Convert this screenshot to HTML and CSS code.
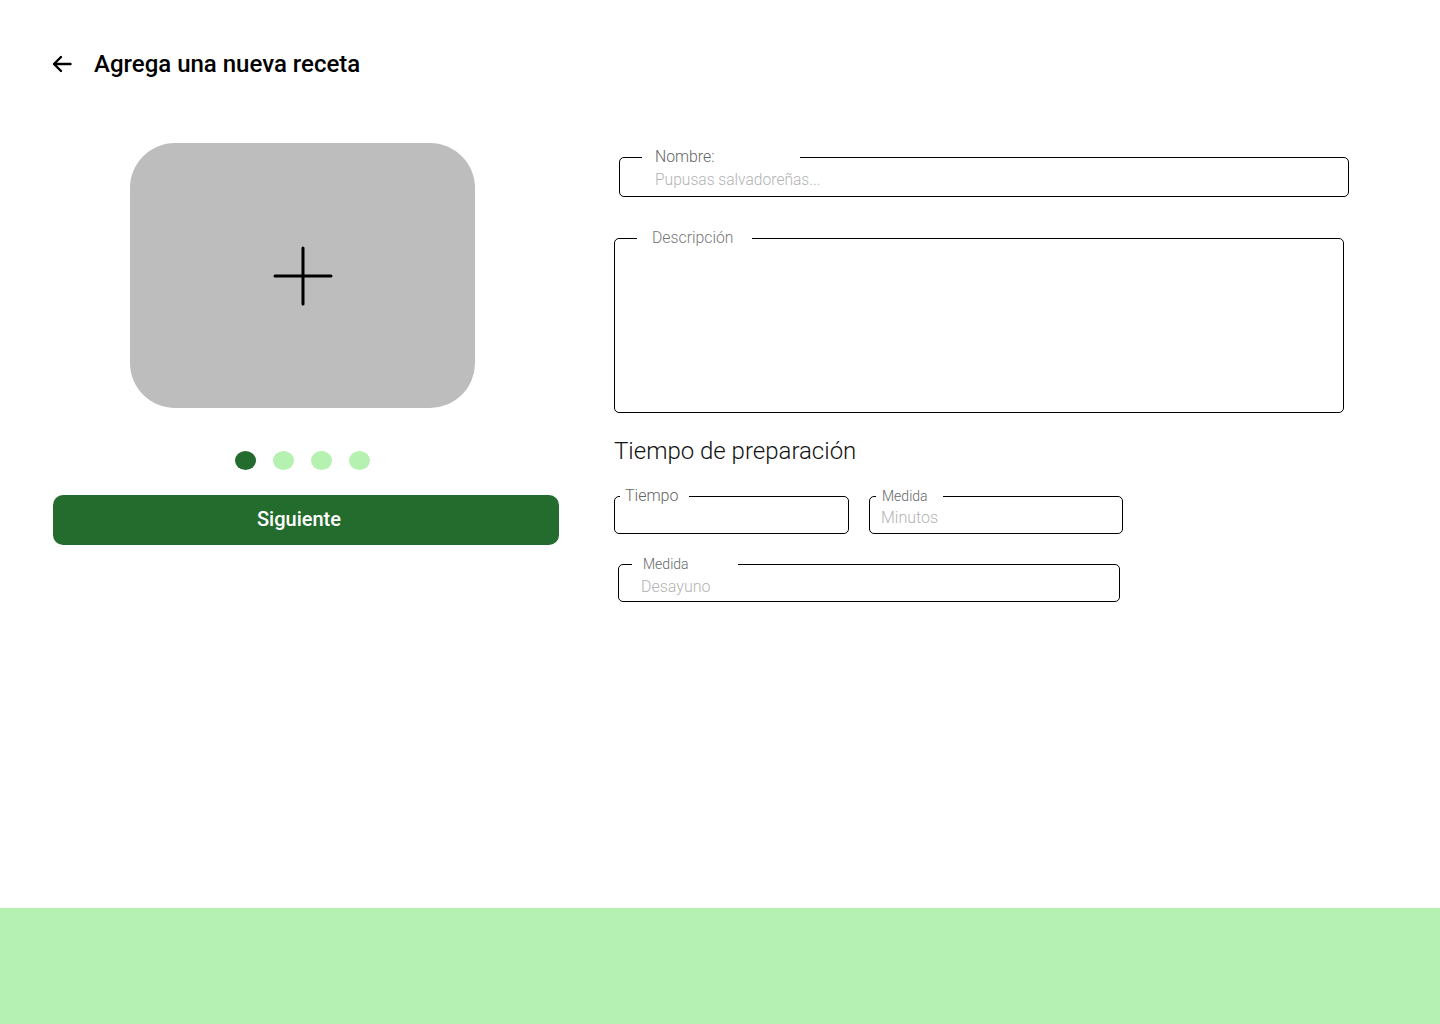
FILE: index.html
```html
<!DOCTYPE html>
<html lang="es">
<head>
<meta charset="utf-8">
<title>Agrega una nueva receta</title>
<link rel="stylesheet" href="styles.css">
</head>
<body>
<header class="topbar">
  <button class="back-btn" aria-label="Volver">
    <svg width="24" height="24" viewBox="0 0 24 24" fill="none" stroke="#000" stroke-width="2.4" stroke-linecap="round" stroke-linejoin="round"><path d="M20.5 12H4M11 5l-7 7 7 7"/></svg>
  </button>
  <h1 class="title">Agrega una nueva receta</h1>
</header>

<main class="content">
  <section class="media-col">
    <div class="media-stack">
      <div class="photo-drop">
        <svg width="60" height="60" viewBox="0 0 60 60" fill="none" stroke="#000" stroke-width="3" stroke-linecap="round"><path d="M30 2v56M2 30h56"/></svg>
      </div>
      <div class="dots">
        <span class="dot active"></span>
        <span class="dot"></span>
        <span class="dot"></span>
        <span class="dot"></span>
      </div>
    </div>
    <button class="next-btn">Siguiente</button>
  </section>

  <section class="form-col">
    <fieldset class="field field-name">
      <legend>Nombre:</legend>
      <div class="placeholder">Pupusas salvadoreñas...</div>
    </fieldset>

    <fieldset class="field field-desc">
      <legend>Descripción</legend>
      <div class="textarea"></div>
    </fieldset>

    <h2 class="section-title">Tiempo de preparación</h2>

    <div class="time-row">
      <fieldset class="field field-time">
        <legend>Tiempo</legend>
        <div class="placeholder"></div>
      </fieldset>
      <fieldset class="field field-unit">
        <legend>Medida</legend>
        <div class="placeholder">Minutos</div>
      </fieldset>
    </div>

    <fieldset class="field field-meal">
      <legend>Medida</legend>
      <div class="placeholder">Desayuno</div>
    </fieldset>
  </section>
</main>

<footer class="footer-band"></footer>
</body>
</html>
```

FILE: styles.css
```css
* { box-sizing: border-box; }

html, body {
  margin: 0;
  padding: 0;
}

body {
  min-height: 100vh;
  display: flex;
  flex-direction: column;
  font-family: Roboto, "Liberation Sans", sans-serif;
  color: #000;
  background: #fff;
}

/* Header */
.topbar {
  display: flex;
  align-items: center;
  padding: 50px 0 0 50px;
  height: 78px;
}

.back-btn {
  border: 0;
  background: none;
  padding: 0;
  width: 24px;
  height: 24px;
  display: flex;
  align-items: center;
  justify-content: center;
  cursor: pointer;
}

.title {
  margin: 0 0 0 20px;
  font-size: 24px;
  line-height: 28px;
  font-weight: 500;
}

/* Main */
.content {
  flex: 1;
  display: flex;
  align-items: flex-start;
  padding: 65px 0 0 53px;
  gap: 55px;
}

.media-col {
  width: 506px;
  display: flex;
  flex-direction: column;
}

.media-stack {
  width: 345px;
  margin-left: 77px;
  display: flex;
  flex-direction: column;
  align-items: center;
}

.photo-drop {
  width: 345px;
  height: 265px;
  border-radius: 45px;
  background: #bdbdbd;
  display: flex;
  align-items: center;
  justify-content: center;
}

.dots {
  display: flex;
  gap: 17px;
  margin-top: 43px;
}

.dot {
  width: 21px;
  height: 19px;
  border-radius: 50%;
  background: #b5f1b1;
}

.dot.active {
  background: #246b2e;
}

.next-btn {
  margin-top: 25px;
  width: 506px;
  height: 50px;
  border: 0;
  border-radius: 10px;
  background: #246b2e;
  color: #fff;
  font-family: Roboto, "Liberation Sans", sans-serif;
  font-size: 20px;
  font-weight: 500;
  padding: 0 14px 2px 0;
  cursor: pointer;
}

/* Form */
.form-col {
  width: 740px;
  padding-top: 5px;
  display: flex;
  flex-direction: column;
  align-items: flex-start;
}

.field {
  margin: 0;
  min-width: 0;
  border: 1px solid #000;
  border-radius: 5px;
}

.field legend {
  font-weight: 300;
  color: #666;
  line-height: 18px;
}

.placeholder {
  font-weight: 300;
  color: #b3b3b3;
  line-height: 20px;
  height: 20px;
  font-size: 16px;
}

.field-name {
  width: 730px;
  margin-left: 5px;
  padding: 4px 0 6px 22px;
}

.field-name legend {
  font-size: 15.8px;
  padding: 0 85px 0 13px;
}

.field-name .placeholder {
  font-size: 15.6px;
  margin-left: 13px;
}

.field-desc {
  width: 730px;
  margin-top: 32px;
  padding: 0 0 0 22px;
}

.field-desc legend {
  font-size: 15.8px;
  padding: 0 18px 0 15px;
  color: #777;
}

.textarea {
  height: 165px;
}

.section-title {
  margin: 24px 0 0;
  font-size: 24px;
  line-height: 28px;
  font-weight: 300;
  color: #111;
}

.time-row {
  display: flex;
  align-items: flex-start;
  gap: 20px;
  margin-top: 22px;
}

.field-time {
  width: 235px;
  padding: 3px 0 5px 5px;
}

.field-time legend {
  font-size: 16px;
  padding: 0 11px 0 5px;
}

.field-unit {
  width: 254px;
  padding: 3px 0 5px 6px;
}

.field-unit legend {
  font-size: 14px;
  padding: 0 15px 0 6px;
}

.field-unit .placeholder {
  margin-left: 5px;
}

.field-meal {
  width: 502px;
  margin: 21px 0 0 4px;
  padding: 4px 0 4px 13px;
}

.field-meal legend {
  font-size: 14px;
  padding: 0 49px 0 11px;
}

.field-meal .placeholder {
  margin-left: 9px;
}

/* Footer */
.footer-band {
  height: 116px;
  background: #b5f1b2;
}
```
